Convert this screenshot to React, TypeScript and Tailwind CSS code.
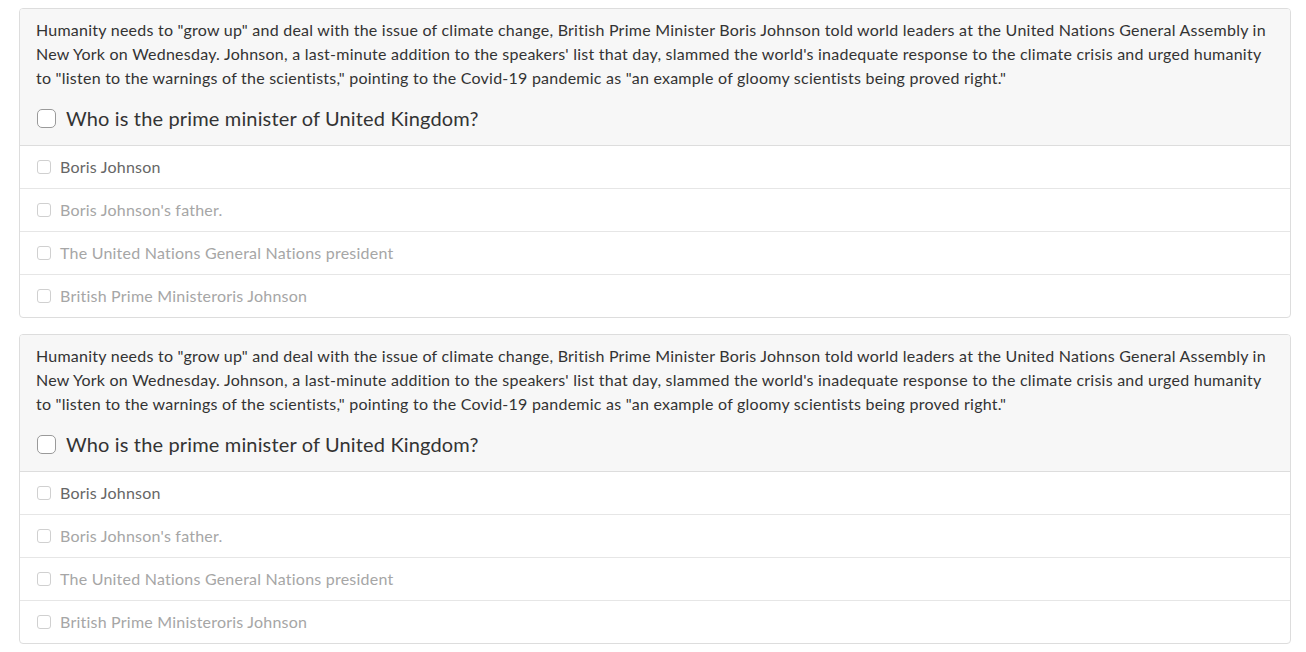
import React from 'react';

const passage =
  'Humanity needs to "grow up" and deal with the issue of climate change, British Prime Minister Boris Johnson told world leaders at the United Nations General Assembly in New York on Wednesday. Johnson, a last-minute addition to the speakers\' list that day, slammed the world\'s inadequate response to the climate crisis and urged humanity to "listen to the warnings of the scientists," pointing to the Covid-19 pandemic as "an example of gloomy scientists being proved right."';

const options = [
  'Boris Johnson',
  "Boris Johnson's father.",
  'The United Nations General Nations president',
  'British Prime Ministeroris Johnson',
];

const QuestionCard: React.FC = () => (
  <div className="border border-[#dddddd] rounded-[4px] bg-white overflow-hidden">
    <div className="bg-[#f7f7f7] border-b border-[#dddddd] pl-4 pr-4 pt-[9px] pb-[13px]">
      <p className="text-[16px] leading-[24px] tracking-[0.24px] text-[#333333]">{passage}</p>
      <label className="flex items-center mt-[14px] h-[28px]">
        <span className="w-[19px] h-[19px] ml-[1px] border border-[#9a9a9a] rounded-[5px] bg-white shrink-0" />
        <span className="ml-[10px] text-[20px] leading-[28px] tracking-[0.15px] text-[#333333]">Who is the prime minister of United Kingdom?</span>
      </label>
    </div>
    {options.map((opt, i) => (
      <div
        key={i}
        className={`flex items-center pl-[17px] ${i > 0 ? 'h-[43px] border-t border-[#e6e6e6]' : 'h-[42px]'}`}
      >
        <span className="w-[14px] h-[14px] border border-[#d0d0d0] rounded-[3px] bg-white shrink-0" />
        <span className={`ml-[9px] text-[16px] tracking-[0.22px] ${i === 0 ? 'text-[#666666]' : 'text-[#a6a6a6]'}`}>{opt}</span>
      </div>
    ))}
  </div>
);

export default function App() {
  return (
    <div className="bg-white min-h-screen pl-[19px] pr-[15px] pt-2 flex flex-col gap-[16px]" style={{ fontFamily: '"Lato", "Liberation Sans", sans-serif' }}>
      <QuestionCard />
      <QuestionCard />
    </div>
  );
}
